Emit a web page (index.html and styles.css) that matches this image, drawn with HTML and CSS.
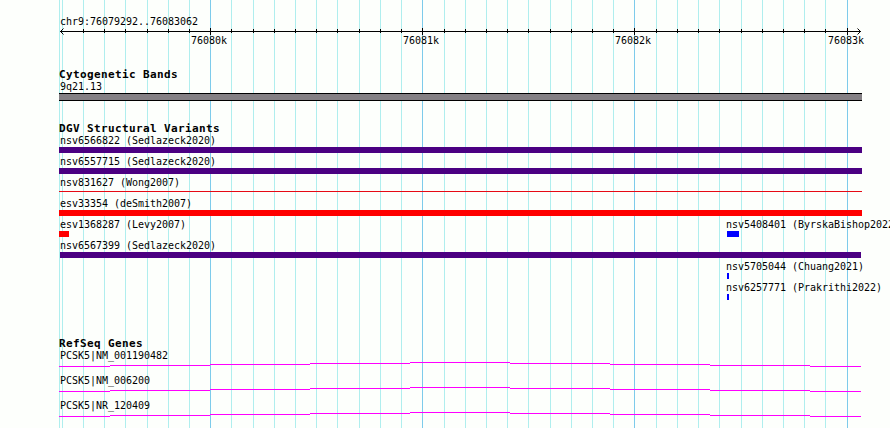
FILE: index.html
```
<!DOCTYPE html>
<html lang="en">
<head>
    <meta charset="UTF-8">
    <title>chr9:76079292..76083062</title>
    <link rel="stylesheet" href="styles.css">
</head>
<body>
    <div class="browser">
        <!-- vertical grid lines -->
        <svg class="grid" width="890" height="428">
            <path class="minor" d="M59.5 0v428M62.5 0v428M83.5 0v428M104.5 0v428M125.5 0v428M147.5 0v428M168.5 0v428M189.5 0v428M231.5 0v428M253.5 0v428M274.5 0v428M295.5 0v428M316.5 0v428M337.5 0v428M359.5 0v428M380.5 0v428M401.5 0v428M444.5 0v428M465.5 0v428M486.5 0v428M507.5 0v428M528.5 0v428M550.5 0v428M571.5 0v428M592.5 0v428M613.5 0v428M656.5 0v428M677.5 0v428M698.5 0v428M719.5 0v428M741.5 0v428M762.5 0v428M783.5 0v428M804.5 0v428M825.5 0v428"/>
            <path class="major" d="M210.5 0v428M422.5 0v428M634.5 0v428M847.5 0v428"/>
        </svg>

        <div class="ruler">
            <div class="label">chr9:76079292..76083062</div>
            <svg class="scale" width="831" height="24" viewBox="59 26 831 24">
                <path d="M60 31.5H861M83.5 29v4M104.5 29v4M125.5 29v4M147.5 29v4M168.5 29v4M189.5 29v4M210.5 28v7M231.5 29v4M253.5 29v4M274.5 29v4M295.5 29v4M316.5 29v4M337.5 29v4M359.5 29v4M380.5 29v4M401.5 29v4M422.5 28v7M444.5 29v4M465.5 29v4M486.5 29v4M507.5 29v4M528.5 29v4M550.5 29v4M571.5 29v4M592.5 29v4M613.5 29v4M634.5 28v7M656.5 29v4M677.5 29v4M698.5 29v4M719.5 29v4M741.5 29v4M762.5 29v4M783.5 29v4M804.5 29v4M825.5 29v4M847.5 28v7"/>
                <path class="arrow" d="M63.5 28.5L60.5 31.5L63.5 34.5M857.5 28.5L860.5 31.5L857.5 34.5"/>
                <text x="191" y="44">76080k</text>
                <text x="403" y="44">76081k</text>
                <text x="615" y="44">76082k</text>
                <text x="828" y="44">76083k</text>
            </svg>
        </div>

        <div class="track bands">
            <h2>Cytogenetic Bands</h2>
            <div class="label">9q21.13</div>
            <div class="band"></div>
        </div>

        <div class="track variants">
            <h2>DGV Structural Variants</h2>
            <div class="row">
                <div class="label">nsv6566822 (Sedlazeck2020)</div>
                <div class="bar complex"></div>
            </div>
            <div class="row">
                <div class="label">nsv6557715 (Sedlazeck2020)</div>
                <div class="bar complex"></div>
            </div>
            <div class="row">
                <div class="label">nsv831627 (Wong2007)</div>
                <div class="bar thin"></div>
            </div>
            <div class="row">
                <div class="label">esv33354 (deSmith2007)</div>
                <div class="bar loss"></div>
            </div>
            <div class="row split">
                <div class="feature">
                    <div class="label">esv1368287 (Levy2007)</div>
                    <div class="bar loss short"></div>
                </div>
                <div class="feature right">
                    <div class="label">nsv5408401 (ByrskaBishop2022)</div>
                    <div class="bar gain wide"></div>
                </div>
            </div>
            <div class="row">
                <div class="label">nsv6567399 (Sedlazeck2020)</div>
                <div class="bar complex inset"></div>
            </div>
            <div class="row split">
                <div class="feature right">
                    <div class="label">nsv5705044 (Chuang2021)</div>
                    <div class="bar gain"></div>
                </div>
            </div>
            <div class="row split">
                <div class="feature right">
                    <div class="label">nsv6257771 (Prakrithi2022)</div>
                    <div class="bar gain"></div>
                </div>
            </div>
        </div>

        <div class="track genes">
            <h2>RefSeq Genes</h2>
            <div class="gene">
                <div class="label">PCSK5|NM_001190482</div>
                <svg class="intron" width="802" height="5"><path d="M0 4.5h51M51 3.5h100M151 2.5h100M251 1.5h100M351 .5h100M451 1.5h100M551 2.5h100M651 3.5h100M751 4.5h51"/></svg>
            </div>
            <div class="gene">
                <div class="label">PCSK5|NM_006200</div>
                <svg class="intron" width="802" height="5"><path d="M0 4.5h51M51 3.5h100M151 2.5h100M251 1.5h100M351 .5h100M451 1.5h100M551 2.5h100M651 3.5h100M751 4.5h51"/></svg>
            </div>
            <div class="gene">
                <div class="label">PCSK5|NR_120409</div>
                <svg class="intron" width="802" height="5"><path d="M0 4.5h51M51 3.5h100M151 2.5h100M251 1.5h100M351 .5h100M451 1.5h100M551 2.5h100M651 3.5h100M751 4.5h51"/></svg>
            </div>
        </div>
    </div>
</body>
</html>
```
FILE: styles.css
```
body {
    margin: 0;
    background-color: #fdfffc;
    color: #000;
    font-family: "DejaVu Sans Mono", monospace;
    font-size: 10px;
    overflow: hidden;
}

.browser {
    position: relative;
    box-sizing: border-box;
    width: 890px;
    height: 428px;
    padding: 13px 0 0 59px;
    overflow: hidden;
}

svg {
    display: block;
    shape-rendering: crispEdges;
}

.grid {
    position: absolute;
    top: 0;
    left: 0;
    z-index: -1;
}

.grid .minor {
    stroke: #afeeee;
}

.grid .major {
    stroke: #7dcbeb;
}

/* labels */
.label {
    box-sizing: border-box;
    height: 15px;
    padding: 3px 0 0 1px;
    line-height: 12px;
    letter-spacing: -0.02px;
    white-space: pre;
}

h2 {
    margin: 0;
    height: 15px;
    font-size: 11px;
    line-height: 15px;
    letter-spacing: 0.38px;
    white-space: pre;
}

/* ruler */
.ruler {
    height: 54px;
}

.ruler .label {
    height: 13px;
}

.scale path {
    fill: none;
    stroke: #000;
}

.scale .arrow {
    shape-rendering: auto;
}

.scale text {
    font-size: 10px;
    letter-spacing: -0.02px;
}

/* tracks */
.track {
    width: 803px;
}

.bands {
    height: 54px;
}

.bands h2,
.variants h2 {
    height: 11px;
}

.band {
    box-sizing: border-box;
    height: 8px;
    background-color: #848084;
    border-top: 1px solid #000;
    border-bottom: 1px solid #000;
}

.variants {
    height: 215px;
}

.row {
    height: 21px;
}

.split {
    display: flex;
    justify-content: space-between;
}

.right {
    width: 136px;
    margin-left: auto;
}

.right .label {
    padding-left: 0;
}

.right .bar {
    margin-left: 1px;
}

.bar {
    height: 6px;
}

.complex {
    background-color: #4b0082;
}

.loss {
    background-color: #ff0000;
}

.gain {
    width: 2px;
    background-color: #0000ff;
}

.wide {
    width: 12px;
}

.thin {
    height: 1px;
    margin-top: 2px;
    background-color: #e60a14;
}

.short {
    width: 10px;
}

.inset {
    margin: 0 1px;
}

/* genes */
.genes h2 {
    height: 11px;
}

.gene {
    height: 25px;
}

.intron {
    stroke: #ff00ff;
}
```
